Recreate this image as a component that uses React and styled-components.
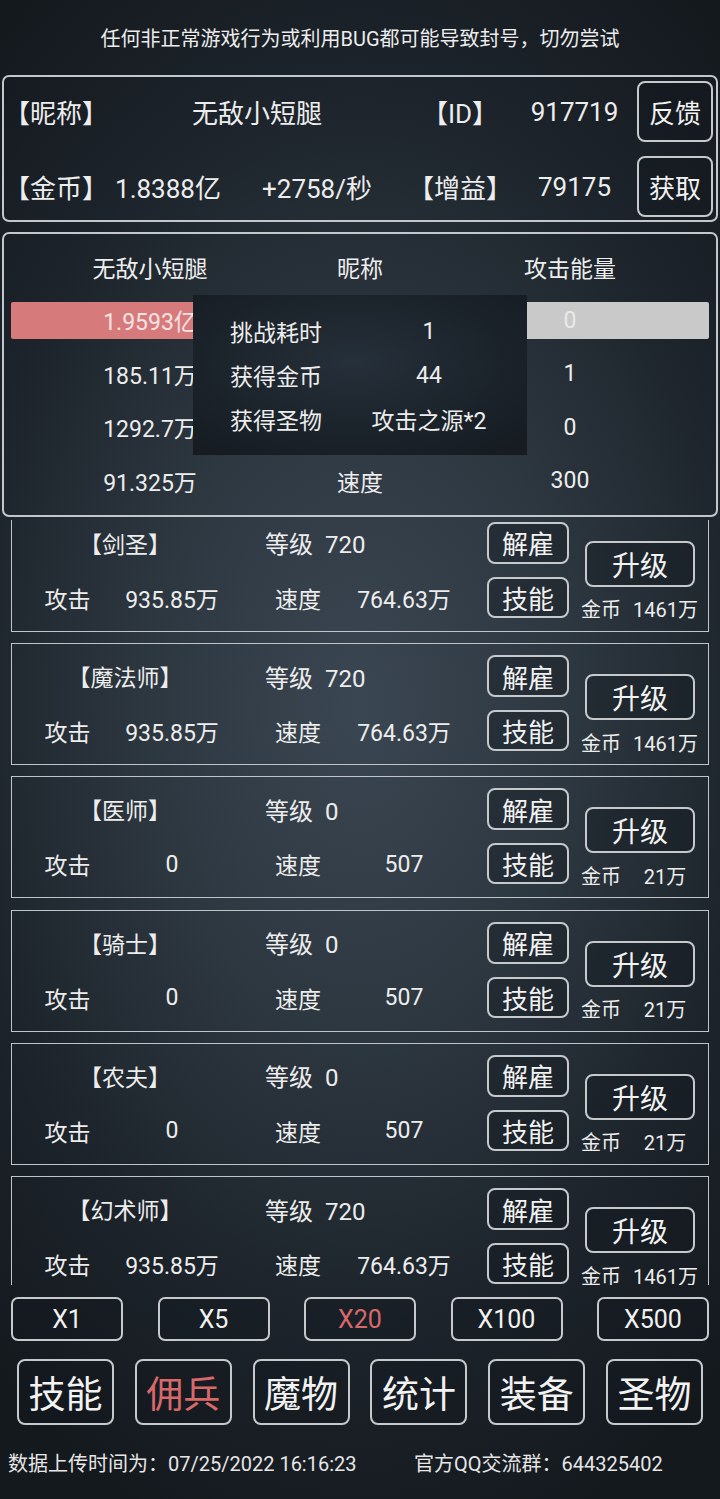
import React from 'react';
import styled, { createGlobalStyle } from 'styled-components';

const GlobalStyle = createGlobalStyle`
  html, body { margin: 0; padding: 0; }
  body {
    background: #161b21;
    font-family: Roboto, "Noto Sans CJK SC", sans-serif;
    color: #f0f0f0;
  }
  * { box-sizing: border-box; }
`;

const Page = styled.div`
  width: 720px;
  height: 1499px;
  overflow: hidden;
  display: flex;
  flex-direction: column;
  background: radial-gradient(ellipse 78% 58% at 50% 47%, #3a4652 0%, #2d3740 38%, #1c232a 72%, #14191e 100%);
  white-space: nowrap;
`;

const Notice = styled.div`
  height: 75px;
  flex: none;
  display: flex;
  align-items: center;
  justify-content: center;
  font-size: 20px;
  color: #ececec;
`;

const InfoPanel = styled.div`
  flex: none;
  margin: 0 2px;
  height: 147px;
  border: 2px solid #c3c7cb;
  border-radius: 7px;
  padding: 4px 3px 3px 0;
  display: flex;
  flex-direction: column;
  gap: 14px;
`;

const InfoRow = styled.div`
  height: 61px;
  display: grid;
  grid-template-columns: 100px 128px 170px 116px 113px 82px;
  align-items: center;
  text-align: center;
  font-size: 26px;
  color: #ededed;
`;

const InfoCell = styled.div`
  grid-column: ${p => (p.$span ? `span ${p.$span}` : 'auto')};
  ${p => (p.$shift ? `transform: translateX(${p.$shift}px);` : '')}
`;

const OutlineButton = styled.button`
  font-family: inherit;
  color: ${p => (p.$active ? '#d8696a' : '#f2f2f2')};
  background: rgba(18, 23, 29, 0.35);
  border: 2px solid #c6c9cc;
  border-radius: ${p => p.$radius || 8}px;
  padding: 0;
  display: flex;
  align-items: center;
  justify-content: center;
  white-space: nowrap;
`;

const InfoButton = styled(OutlineButton)`
  justify-self: end;
  width: 76px;
  height: 61px;
  font-size: 26px;
`;

const BattlePanel = styled.div`
  flex: none;
  position: relative;
  margin: 10px 2px 0;
  height: 285px;
  border: 2px solid #c3c7cb;
  border-radius: 7px;
  padding: 6px 7px 0;
`;

const BattleGrid = styled.div`
  display: grid;
  grid-template-columns: 278px 142px 278px;
  grid-auto-rows: 53.5px;
  align-items: center;
  text-align: center;
  font-size: 23px;
  color: #ededed;
`;

const Bar = styled.div`
  height: 37px;
  display: flex;
  align-items: center;
  justify-content: center;
  border-radius: 2px;
  background: ${p => (p.$tone === 'red' ? '#d77a7c' : '#c9c9c9')};
  color: ${p => (p.$tone === 'red' ? '#f6e4e4' : '#e9e9e9')};
`;

const ResultPopup = styled.div`
  position: absolute;
  left: 189px;
  top: 61px;
  width: 334px;
  height: 160px;
  padding: 14px 0 0 37px;
  background: radial-gradient(ellipse 70% 70% at 48% 42%, #26303a 0%, #1c242c 55%, #161c22 100%);
  display: grid;
  grid-template-columns: 110px 178px;
  grid-auto-rows: 44px;
  align-content: start;
  align-items: center;
  font-size: 23px;
  color: #ededed;
`;

const PopupValue = styled.div`
  text-align: center;
`;

const HeroScroll = styled.div`
  flex: none;
  margin-top: 3px;
  height: 765px;
  overflow: hidden;
  padding: 0 11px;
`;

const HeroList = styled.div`
  margin-top: -10.25px;
  display: flex;
  flex-direction: column;
  gap: 11.25px;
`;

const HeroCard = styled.div`
  flex: none;
  height: 122px;
  border: 1px solid #c0c4c8;
  display: grid;
  grid-template-columns: 1fr 82px 110px;
  column-gap: 16px;
  padding-right: 13px;
  color: #ededed;
`;

const HeroInfo = styled.div`
  padding-top: 12px;
  display: flex;
  flex-direction: column;
  gap: 15px;
`;

const NameRow = styled.div`
  height: 40px;
  display: grid;
  grid-template-columns: 226px 1fr;
  align-items: center;
  font-size: 23px;
`;

const HeroName = styled.div`
  text-align: center;
`;

const HeroLevel = styled.div`
  padding-left: 27px;
  display: flex;
  align-items: baseline;
  gap: 12px;
  font-size: 24px;
`;

const StatRow = styled.div`
  height: 40px;
  padding-left: 21px;
  display: grid;
  grid-template-columns: 69px 140px 112px 100px;
  align-items: center;
  text-align: center;
  font-size: 23px;
`;

const ActionCol = styled.div`
  padding-top: 11px;
  display: flex;
  flex-direction: column;
  gap: 13px;
`;

const SmallButton = styled(OutlineButton)`
  width: 82px;
  height: ${p => p.$h}px;
  font-size: 26px;
`;

const UpgradeCol = styled.div`
  padding-top: 30px;
  display: flex;
  flex-direction: column;
`;

const UpgradeButton = styled(OutlineButton)`
  width: 110px;
  height: 46px;
  font-size: 28px;
`;

const CostRow = styled.div`
  margin: 7px -2px 0 -4px;
  height: 30px;
  display: grid;
  grid-template-columns: 40px 64px;
  column-gap: 12px;
  align-items: center;
  text-align: center;
  font-size: 20px;
`;

const MultiplierRow = styled.div`
  flex: none;
  margin-top: 12px;
  height: 44px;
  padding: 0 11px;
  display: flex;
  justify-content: space-between;
`;

const MultiplierButton = styled(OutlineButton)`
  width: 112px;
  height: 44px;
  font-size: 25px;
`;

const TabRow = styled.div`
  flex: none;
  margin-top: 18px;
  height: 66px;
  padding: 0 17px;
  display: flex;
  justify-content: space-between;
`;

const TabButton = styled(OutlineButton)`
  width: 97px;
  height: 66px;
  font-size: 37px;
`;

const Footer = styled.div`
  flex: 1;
  display: grid;
  grid-template-columns: 406px auto;
  align-items: center;
  padding-left: 8px;
  font-size: 20px;
  color: #e6e6e6;
`;

const heroes = [
  { name: '【剑圣】', level: 720, atk: '935.85万', spd: '764.63万', cost: '1461万' },
  { name: '【魔法师】', level: 720, atk: '935.85万', spd: '764.63万', cost: '1461万' },
  { name: '【医师】', level: 0, atk: '0', spd: '507', cost: '21万' },
  { name: '【骑士】', level: 0, atk: '0', spd: '507', cost: '21万' },
  { name: '【农夫】', level: 0, atk: '0', spd: '507', cost: '21万' },
  { name: '【幻术师】', level: 720, atk: '935.85万', spd: '764.63万', cost: '1461万' },
];

const multipliers = ['X1', 'X5', 'X20', 'X100', 'X500'];
const tabs = ['技能', '佣兵', '魔物', '统计', '装备', '圣物'];

export default function App() {
  return (
    <Page>
      <GlobalStyle />
      <Notice>任何非正常游戏行为或利用BUG都可能导致封号，切勿尝试</Notice>

      <InfoPanel>
        <InfoRow>
          <InfoCell>【昵称】</InfoCell>
          <InfoCell $span={2} $shift={4}>无敌小短腿</InfoCell>
          <InfoCell>【ID】</InfoCell>
          <InfoCell>917719</InfoCell>
          <InfoButton>反馈</InfoButton>
        </InfoRow>
        <InfoRow>
          <InfoCell>【金币】</InfoCell>
          <InfoCell>1.8388亿</InfoCell>
          <InfoCell>+2758/秒</InfoCell>
          <InfoCell>【增益】</InfoCell>
          <InfoCell>79175</InfoCell>
          <InfoButton>获取</InfoButton>
        </InfoRow>
      </InfoPanel>

      <BattlePanel>
        <BattleGrid>
          <div>无敌小短腿</div>
          <div>昵称</div>
          <div>攻击能量</div>

          <Bar $tone="red">1.9593亿</Bar>
          <div />
          <Bar $tone="grey">0</Bar>

          <div>185.11万</div>
          <div />
          <div>1</div>

          <div>1292.7万</div>
          <div />
          <div>0</div>

          <div>91.325万</div>
          <div>速度</div>
          <div>300</div>
        </BattleGrid>
        <ResultPopup>
          <div>挑战耗时</div>
          <PopupValue>1</PopupValue>
          <div>获得金币</div>
          <PopupValue>44</PopupValue>
          <div>获得圣物</div>
          <PopupValue>攻击之源*2</PopupValue>
        </ResultPopup>
      </BattlePanel>

      <HeroScroll>
        <HeroList>
          {heroes.map((h, i) => (
            <HeroCard key={i}>
              <HeroInfo>
                <NameRow>
                  <HeroName>{h.name}</HeroName>
                  <HeroLevel>
                    <span>等级</span>
                    <span>{h.level}</span>
                  </HeroLevel>
                </NameRow>
                <StatRow>
                  <div>攻击</div>
                  <div>{h.atk}</div>
                  <div>速度</div>
                  <div>{h.spd}</div>
                </StatRow>
              </HeroInfo>
              <ActionCol>
                <SmallButton $h={42}>解雇</SmallButton>
                <SmallButton $h={41}>技能</SmallButton>
              </ActionCol>
              <UpgradeCol>
                <UpgradeButton>升级</UpgradeButton>
                <CostRow>
                  <span>金币</span>
                  <span>{h.cost}</span>
                </CostRow>
              </UpgradeCol>
            </HeroCard>
          ))}
        </HeroList>
      </HeroScroll>

      <MultiplierRow>
        {multipliers.map(m => (
          <MultiplierButton key={m} $radius={7} $active={m === 'X20'}>{m}</MultiplierButton>
        ))}
      </MultiplierRow>

      <TabRow>
        {tabs.map(t => (
          <TabButton key={t} $active={t === '佣兵'}>{t}</TabButton>
        ))}
      </TabRow>

      <Footer>
        <span>数据上传时间为：07/25/2022 16:16:23</span>
        <span>官方QQ交流群：644325402</span>
      </Footer>
    </Page>
  );
}
